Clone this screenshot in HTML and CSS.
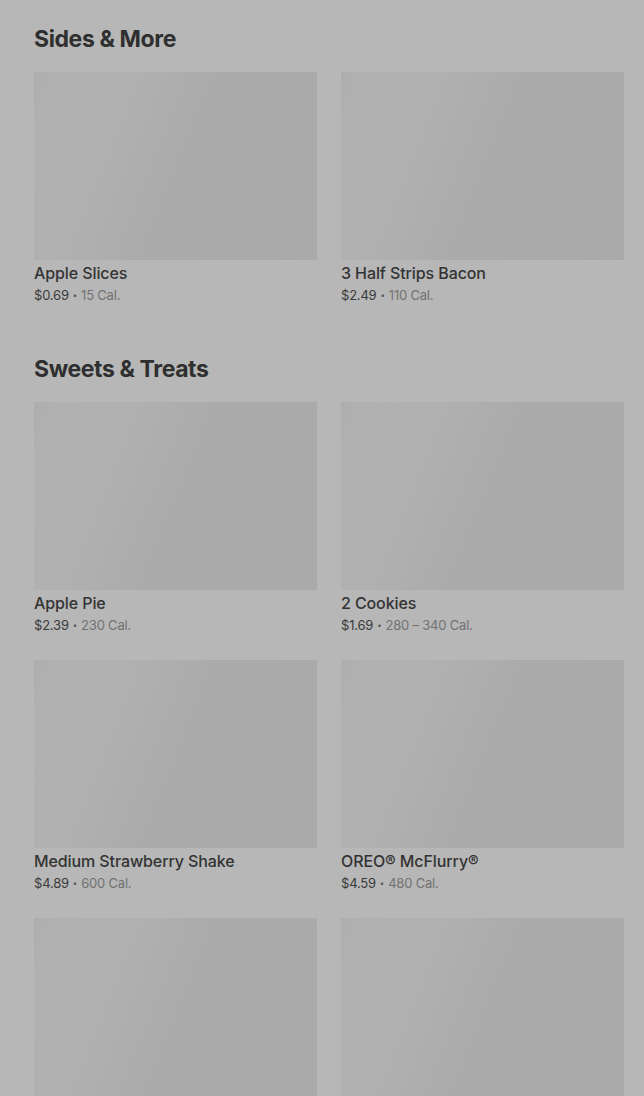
FILE: index.html
```html
<!DOCTYPE html>
<html lang="en">
<head>
<meta charset="utf-8">
<title>Menu</title>
<link rel="stylesheet" href="styles.css">
</head>
<body>
<main class="menu">
  <section class="section">
    <h2 class="section-title">Sides &amp; More</h2>
    <div class="grid">
      <div class="item">
        <div class="thumb"></div>
        <div class="name">Apple Slices</div>
        <div class="meta"><span class="price">$0.69</span><span class="dot">•</span><span class="cal">15 Cal.</span></div>
      </div>
      <div class="item">
        <div class="thumb"></div>
        <div class="name">3 Half Strips Bacon</div>
        <div class="meta"><span class="price">$2.49</span><span class="dot">•</span><span class="cal">110 Cal.</span></div>
      </div>
    </div>
  </section>
  <section class="section">
    <h2 class="section-title">Sweets &amp; Treats</h2>
    <div class="grid">
      <div class="item">
        <div class="thumb"></div>
        <div class="name">Apple Pie</div>
        <div class="meta"><span class="price">$2.39</span><span class="dot">•</span><span class="cal">230 Cal.</span></div>
      </div>
      <div class="item">
        <div class="thumb"></div>
        <div class="name">2 Cookies</div>
        <div class="meta"><span class="price">$1.69</span><span class="dot">•</span><span class="cal">280 – 340 Cal.</span></div>
      </div>
      <div class="item">
        <div class="thumb"></div>
        <div class="name">Medium Strawberry Shake</div>
        <div class="meta"><span class="price">$4.89</span><span class="dot">•</span><span class="cal">600 Cal.</span></div>
      </div>
      <div class="item">
        <div class="thumb"></div>
        <div class="name">OREO® McFlurry®</div>
        <div class="meta"><span class="price">$4.59</span><span class="dot">•</span><span class="cal">480 Cal.</span></div>
      </div>
      <div class="item">
        <div class="thumb"></div>
      </div>
      <div class="item">
        <div class="thumb"></div>
      </div>
    </div>
  </section>
</main>
</body>
</html>
```
FILE: styles.css
```css
html, body {
  margin: 0;
  padding: 0;
  background: #b7b7b7;
  height: 1096px;
  overflow: hidden;
}
body {
  font-family: Inter, "Noto Sans", "Liberation Sans", sans-serif;
  color: #303030;
}
.menu {
  padding: 23px 20px 0 34px;
  display: flex;
  flex-direction: column;
  gap: 47px;
}
.section-title {
  margin: 0 0 17px 0;
  font-size: 23px;
  line-height: 32px;
  font-weight: 700;
  letter-spacing: -0.4px;
  color: #2f2f2f;
}
.grid {
  display: grid;
  grid-template-columns: 283px 283px;
  column-gap: 24px;
  row-gap: 24px;
}
.item {
  display: flex;
  flex-direction: column;
}
.thumb {
  height: 188px;
  background: linear-gradient(112deg, #adadad 0%, #b1b1b1 6%, #b0b0b0 30%, #ababab 50%, #aaaaaa 100%);
}
.name {
  margin-top: 2px;
  font-size: 16px;
  line-height: 22px;
  font-weight: 500;
  letter-spacing: -0.1px;
  color: #333333;
}
.meta {
  padding-top: 1px;
  font-size: 13px;
  line-height: 21px;
  color: #555555;
  letter-spacing: -0.2px;
}
.price {
  color: #3a3a3a;
}
.dot {
  font-size: 8px;
  margin: 0 4px;
  vertical-align: 2px;
  color: #555555;
}
.cal {
  color: #727272;
}
```
